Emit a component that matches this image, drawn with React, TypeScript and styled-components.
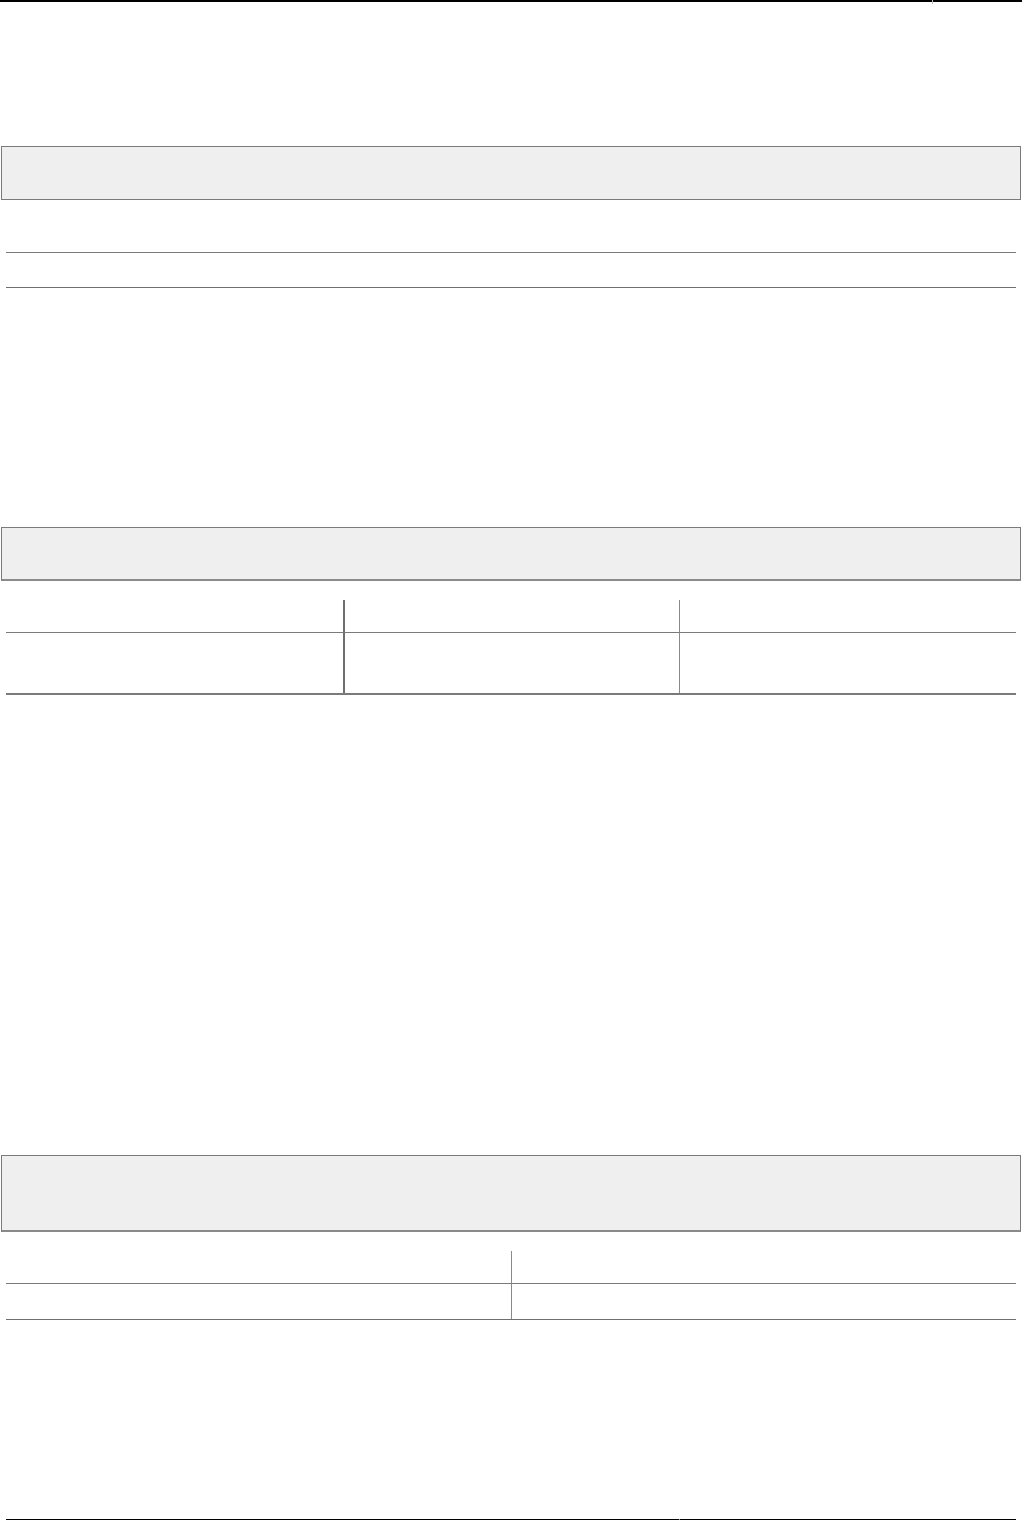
import React from "react";
import styled, { createGlobalStyle } from "styled-components";

const Global = createGlobalStyle`
  html, body { margin: 0; padding: 0; background: #ffffff; }
  body { font-family: "Liberation Sans", Arial, sans-serif; font-size: 13px; color: #222; }
`;

const Page = styled.div`
  width: 1022px;
  min-height: 1520px;
  display: flex;
  flex-direction: column;
  box-sizing: border-box;
`;

const HeaderBar = styled.div`
  display: grid;
  grid-template-columns: 932px 84px;
  height: 2px;
  border-top: 2px solid #000;
  box-sizing: border-box;
`;

const HeaderCell = styled.div<{ $sep?: boolean }>`
  border-left: ${(p) => (p.$sep ? "1px solid #bbb" : "none")};
  height: 4px;
  margin-top: -2px;
`;

const Panel = styled.div<{ $top: number; $height: number; $thickBottom?: boolean }>`
  margin: ${(p) => p.$top}px 0 0 1px;
  width: 1020px;
  height: ${(p) => p.$height}px;
  box-sizing: border-box;
  background: #efefef;
  border: 1px solid #7a7a7a;
  border-bottom: ${(p) => (p.$thickBottom ? "2px solid #8a8a8a" : "1px solid #7a7a7a")};
`;

const Table = styled.div<{ $top: number; $cols: number; $thickBottom?: boolean }>`
  margin: ${(p) => p.$top}px 0 0 6px;
  width: 1010px;
  display: grid;
  grid-template-columns: repeat(${(p) => p.$cols}, 1fr);
  border-bottom: ${(p) => (p.$thickBottom ? "2px solid #7a7a7a" : "1px solid #6f6f6f")};
`;

const Cell = styled.div<{ $height: number; $sep?: string; $headRow?: boolean }>`
  height: ${(p) => p.$height}px;
  box-sizing: border-box;
  border-left: ${(p) => p.$sep ?? "none"};
  border-bottom: ${(p) => (p.$headRow ? "1px solid #7a7a7a" : "none")};
`;

const Footer = styled.div`
  margin: auto 0 0 6px;
  width: 1010px;
  display: grid;
  grid-template-columns: 673px 1fr;
  border-top: 1px solid #000;
  height: 1px;
  box-sizing: border-box;
`;

const FooterTick = styled.div`
  border-left: 1px solid #999;
  height: 2px;
  margin-top: -1px;
`;

export default function App() {
  const sepA = "2px solid #6f6f6f";
  const sepB = "1px solid #8a8a8a";
  return (
    <>
      <Global />
      <Page>
        <HeaderBar>
          <HeaderCell />
          <HeaderCell $sep />
        </HeaderBar>

        <Panel $top={144} $height={54} />
        <Table $top={18} $cols={1}>
          <Cell $height={35} $headRow />
          <Cell $height={34} />
        </Table>

        <Panel $top={239} $height={54} $thickBottom />
        <Table $top={19} $cols={3} $thickBottom>
          <Cell $height={33} $headRow />
          <Cell $height={33} $headRow $sep={sepA} />
          <Cell $height={33} $headRow $sep={sepB} />
          <Cell $height={60} />
          <Cell $height={60} $sep={sepA} />
          <Cell $height={60} $sep={sepB} />
        </Table>

        <Panel $top={460} $height={77} $thickBottom />
        <Table $top={19} $cols={2}>
          <Cell $height={33} $headRow />
          <Cell $height={33} $headRow $sep={sepB} />
          <Cell $height={35} />
          <Cell $height={35} $sep={sepB} />
        </Table>

        <Footer>
          <div />
          <FooterTick />
        </Footer>
      </Page>
    </>
  );
}
